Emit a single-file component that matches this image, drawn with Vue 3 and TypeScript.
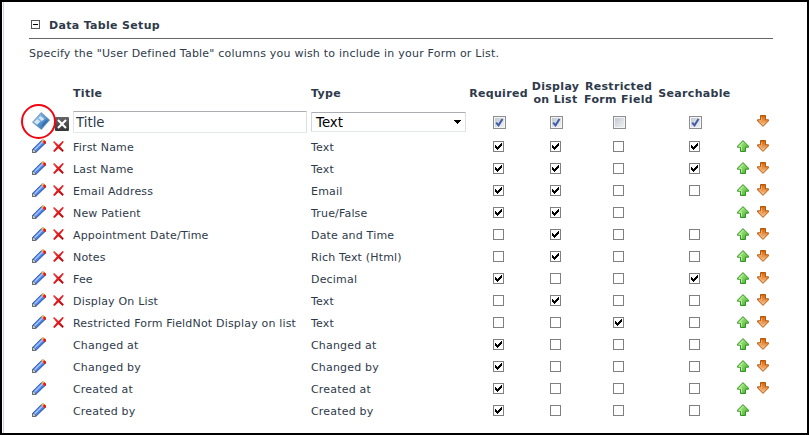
<script setup lang="ts">
import { ref } from 'vue'

interface Column {
  title: string
  type: string
  // required, display on list, restricted, searchable; null hides the box
  flags: (boolean | null)[]
  removable: boolean
  down: boolean
}

const T = true
const F = false

const row = (title: string, type: string, flags: (boolean | null)[], removable = true, down = true): Column => ({
  title,
  type,
  flags,
  removable,
  down,
})

const columns: Column[] = [
  row('First Name', 'Text', [T, T, F, T]),
  row('Last Name', 'Text', [T, T, F, T]),
  row('Email Address', 'Email', [T, T, F, F]),
  row('New Patient', 'True/False', [T, T, F, null]),
  row('Appointment Date/Time', 'Date and Time', [F, T, F, F]),
  row('Notes', 'Rich Text (Html)', [F, T, F, F]),
  row('Fee', 'Decimal', [T, F, F, T]),
  row('Display On List', 'Text', [F, T, F, F]),
  row('Restricted Form FieldNot Display on list', 'Text', [F, F, T, F]),
  row('Changed at', 'Changed at', [T, F, F, F], false),
  row('Changed by', 'Changed by', [T, F, F, F], false),
  row('Created at', 'Created at', [T, F, F, F], false),
  row('Created by', 'Created by', [T, F, F, F], false, false),
]

const editFlags = [true, true, false, true]
const title = ref('Title')
</script>

<template>
  <main class="frame">
    <svg class="defs" width="0" height="0" aria-hidden="true">
      <defs>
        <linearGradient id="green" x1="0" y1="0" x2="1" y2="1">
          <stop offset="0" stop-color="#c9f5a8" />
          <stop offset="0.5" stop-color="#7fd45c" />
          <stop offset="1" stop-color="#3fa52a" />
        </linearGradient>
        <linearGradient id="orange" x1="0.5" y1="0" x2="0.5" y2="1">
          <stop offset="0" stop-color="#cf6306" />
          <stop offset="0.45" stop-color="#e88d40" />
          <stop offset="1" stop-color="#f8cfa4" />
        </linearGradient>
        <linearGradient id="disk" x1="0" y1="0" x2="1" y2="1">
          <stop offset="0" stop-color="#9fc4e6" />
          <stop offset="0.5" stop-color="#5b95cf" />
          <stop offset="1" stop-color="#2463a8" />
        </linearGradient>
        <linearGradient id="dark" x1="0" y1="0" x2="0" y2="1">
          <stop offset="0" stop-color="#666" />
          <stop offset="1" stop-color="#363636" />
        </linearGradient>
        <linearGradient id="cross" x1="0" y1="0" x2="1" y2="1">
          <stop offset="0" stop-color="#f2464c" />
          <stop offset="0.5" stop-color="#dc1c20" />
          <stop offset="1" stop-color="#a80508" />
        </linearGradient>
        <symbol id="pencil" viewBox="0 0 14 14">
          <path d="M0.3 13.7V10.2L9.8 0.8H11.3L13.6 3V4.5L4 13.7Z" fill="#24469a" />
          <path d="M1 10.2 9.4 1.8 12.3 4.7 4 13Z" fill="#4e83e6" />
          <path d="M2.2 10.2 10 2.4 11 3.4 3.2 11.2Z" fill="#a3c6ff" />
          <path d="M0 14V10.6L1 9.7 4.3 13 3.4 14Z" fill="#666e75" />
          <path d="M1 11H2.2L3 12V13H1Z" fill="#c7cac2" />
          <path d="M9 1.7 10.5 0.2H11.6L13.8 2.4V4L12.4 5.2Z" fill="#e9b55c" />
          <path d="M11.3 2.2 12.4 1.2 14 2.8V4.2L12.8 5.3 11.3 3.9Z" fill="#e8121a" />
        </symbol>
        <symbol id="remove" viewBox="0 0 11 11">
          <path
            d="M0 1 1.2 0 5.5 4 9.6 0 10.9 0.8 7.1 5.4 10.8 9.6 9.6 11 5.4 7.2 1.6 11 0 9.9 3.8 5.4Z"
            fill="url(#cross)"
          />
        </symbol>
        <symbol id="up" viewBox="0 0 12 12">
          <path d="M6 0.6 11.5 6.2V7.2H8.5V11.5H3.5V7.2H0.5V6.2Z" fill="url(#green)" stroke="#349327" />
          <path d="M4.5 10.5V6.5H2.2L6 2.5" fill="none" stroke="#c8f5ae" stroke-width="0.8" />
        </symbol>
        <symbol id="down" viewBox="0 0 12 12">
          <path d="M6 11.4 0.5 5.8V4.8H3.5V0.5H8.5V4.8H11.5V5.8Z" fill="url(#orange)" stroke="#b5570c" />
          <path d="M4.5 2V5.7H2.2L6 9.8" fill="none" stroke="#f3b980" stroke-width="0.7" />
        </symbol>
        <symbol id="tick" viewBox="0 0 7 7">
          <path
            d="M0 2H1V3H2V4H3V3H4V2H5V1H6V0H7V3H6V4H5V5H4V6H3V7H2V6H1V5H0Z"
            shape-rendering="crispEdges"
            fill="#000"
          />
        </symbol>
      </defs>
    </svg>

    <section class="panel">
      <header class="heading">
        <span class="toggle"></span>
        <h1>Data Table Setup</h1>
      </header>
      <p class="intro">Specify the "User Defined Table" columns you wish to include in your Form or List.</p>

      <div class="line labels">
        <span></span>
        <span></span>
        <b>Title</b>
        <b>Type</b>
        <b class="mid">Required</b>
        <b class="mid">Display<br />on List</b>
        <b class="mid">Restricted<br />Form Field</b>
        <b class="mid">Searchable</b>
      </div>

      <div class="line edit">
        <span class="save">
          <svg width="18" height="18" viewBox="0 0 18 18">
            <path d="M9.2 0.5 17.6 8 9.4 17.4 0.5 10.3Z" fill="url(#disk)" stroke="#6791b9" stroke-width="0.8" />
            <path d="M8.3 2.2 13.5 6.6 8 10.5 3.4 7.3Z" fill="#85b4df" />
            <path d="M8.5 4.2 12 7.2 10 8.7 6.4 6Z" fill="#d9ebf8" />
            <path d="M1.8 10 5.3 7.1 8.2 9.5 5.2 12.8Z" fill="#d5e6f5" />
            <path d="M10.2 12.2 14 8.2 15.8 8.6 10.2 14.8Z" fill="#336fae" />
          </svg>
          <span class="ring"></span>
        </span>
        <span class="cancel">
          <svg width="14" height="14" viewBox="0 0 14 14">
            <rect width="14" height="14" rx="1" fill="url(#dark)" />
            <path d="M3 3 11 11M11 3 3 11" stroke="#fff" stroke-width="2.1" />
          </svg>
        </span>
        <input v-model="title" class="field" type="text" />
        <div class="select">
          <span class="value">Text</span>
          <svg width="7" height="4" viewBox="0 0 7 4" shape-rendering="crispEdges">
            <path d="M0 0H7V1H6V2H5V3H4V4H3V3H2V2H1V1H0Z" />
          </svg>
        </div>
        <span v-for="(on, i) in editFlags" :key="i" class="mid">
          <span class="glossy">
            <svg v-if="on" width="9" height="9" viewBox="0 0 9 9">
              <path d="M1.2 4.7 3.5 7.3 7.5 1" fill="none" stroke="#3f5aa8" stroke-width="2" />
            </svg>
          </span>
        </span>
        <span></span>
        <span class="arrow"><svg width="12" height="12"><use href="#down" /></svg></span>
      </div>

      <div v-for="c in columns" :key="c.title" class="line item">
        <span class="pencil"><svg width="14" height="14"><use href="#pencil" /></svg></span>
        <span class="remove"><svg v-if="c.removable" width="11" height="11"><use href="#remove" /></svg></span>
        <span class="text">{{ c.title }}</span>
        <span class="text">{{ c.type }}</span>
        <span v-for="(on, i) in c.flags" :key="i" class="mid">
          <span v-if="on !== null" class="box">
            <svg v-if="on" width="7" height="7"><use href="#tick" /></svg>
          </span>
        </span>
        <span class="arrow"><svg width="12" height="12"><use href="#up" /></svg></span>
        <span class="arrow"><svg v-if="c.down" width="12" height="12"><use href="#down" /></svg></span>
      </div>
    </section>
  </main>
</template>

<style>
body {
  background: #fff;
}
</style>

<style scoped>
.frame {
  box-sizing: border-box;
  width: 809px;
  height: 435px;
  padding-left: 1px;
  overflow: hidden;
  border: 2px solid #000;
  background: #fff;
  color: #2e3a4a;
  font: 11px/13px Verdana, 'DejaVu Sans', sans-serif;
}

.defs {
  display: block;
}

.panel {
  box-sizing: border-box;
  height: 431px;
  padding: 14px 0 0 25px;
  border-left: 1px solid #d4d0dd;
}

svg {
  display: block;
}

.heading {
  display: flex;
  align-items: center;
  box-sizing: border-box;
  width: 744px;
  height: 23px;
  padding: 0 0 5px 2px;
  gap: 9px;
  border-bottom: 1px solid #666;
}

.toggle {
  display: flex;
  align-items: center;
  justify-content: center;
  box-sizing: border-box;
  width: 9px;
  height: 9px;
  border: 1px solid #555;
}

.toggle::after {
  width: 5px;
  height: 1px;
  background: #000;
  content: '';
}

h1 {
  margin: 0;
  padding-top: 2px;
  font-size: 11px;
  line-height: 13px;
  letter-spacing: 0.32px;
}

.intro {
  height: 13px;
  margin: 8px 0 20px;
  letter-spacing: 0.22px;
}

.line {
  display: grid;
  grid-template-columns: 24px 20px 238px 158px 59px 55px 71px 81px 20px 20px;
}

.labels {
  align-items: center;
  height: 26px;
  margin-bottom: 4px;
  letter-spacing: 0.32px;
  white-space: nowrap;
}

.mid {
  display: flex;
  justify-content: center;
  text-align: center;
}

.edit {
  height: 26px;
}

.save {
  position: relative;
  padding: 2px 0 0 3px;
}

.ring {
  position: absolute;
  top: -6px;
  left: -8px;
  box-sizing: border-box;
  width: 35px;
  height: 35px;
  border: 2px solid #f00612;
  border-radius: 50%;
}

.cancel {
  padding: 7px 0 0 2px;
}

.field {
  box-sizing: border-box;
  width: 234px;
  height: 22px;
  margin-top: 1px;
  padding: 0 2px;
  border: 1px solid #e3e9ef;
  border-top-color: #abadb3;
  border-right-color: #dbdfe6;
  border-left-color: #e2e3ea;
  border-radius: 1px;
  outline: 0;
  background: #fff;
  color: #2e3a4a;
  font: 13.33px/18px Verdana, 'DejaVu Sans', sans-serif;
}

.select {
  display: flex;
  align-items: center;
  justify-content: space-between;
  box-sizing: border-box;
  width: 155px;
  height: 20px;
  margin-top: 2px;
  padding: 0 4px;
  border: 1px solid #e3e9ef;
  border-top-color: #abadb3;
  border-right-color: #dbdfe6;
  border-left-color: #d2d4de;
  border-radius: 1px;
  color: #000;
  font-size: 13.33px;
  line-height: 18px;
}

.value {
  padding-top: 2px;
}

.glossy {
  display: flex;
  align-items: center;
  justify-content: center;
  box-sizing: border-box;
  width: 13px;
  height: 13px;
  margin: 6px -2px 0 0;
  border: 1px solid #8e8f8f;
  background: linear-gradient(135deg, #bfc5ce, #f3f4f6);
  box-shadow: inset 0 0 0 1px #f4f4f4;
}

.edit .arrow {
  padding-top: 5px;
}

.item {
  height: 22px;
}

.pencil {
  padding: 3px 0 0 3px;
}

.remove {
  padding: 5px 0 0;
}

.text {
  padding-top: 5px;
  letter-spacing: 0.18px;
  white-space: nowrap;
}

.box {
  display: flex;
  align-items: center;
  justify-content: center;
  box-sizing: border-box;
  width: 11px;
  height: 11px;
  margin-top: 5px;
  border: 1px solid #808080;
}

.arrow {
  padding: 4px 0 0 2px;
}
</style>
